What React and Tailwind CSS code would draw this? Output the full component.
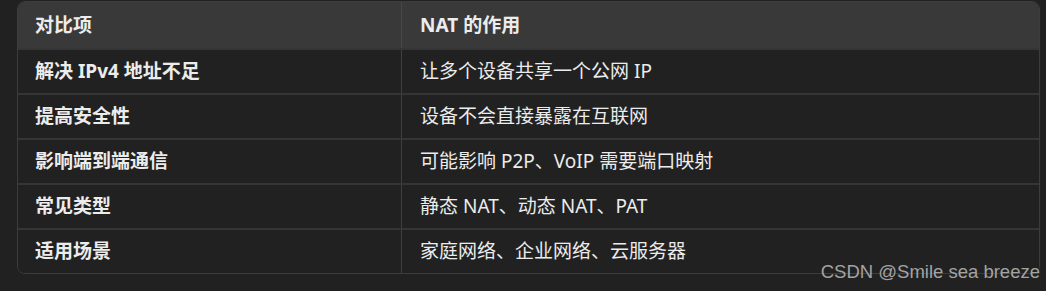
import React from 'react';

const rows = [
    ['解决 IPv4 地址不足', '让多个设备共享一个公网 IP'],
    ['提高安全性', '设备不会直接暴露在互联网'],
    ['影响端到端通信', '可能影响 P2P、VoIP 需要端口映射'],
    ['常见类型', '静态 NAT、动态 NAT、PAT'],
    ['适用场景', '家庭网络、企业网络、云服务器'],
];

const font = { fontFamily: '"Noto Sans", "Noto Sans CJK SC", sans-serif' };

export default function App() {
    return (
        <div className="relative w-[1046px] h-[291px] bg-[#212121] pl-[17px] pt-px overflow-hidden" style={font}>
            <div className="w-[1023px] rounded-lg border border-[#3c3c3c] overflow-hidden text-[19px] text-[#ececec]">
                {/* header */}
                <div className="grid grid-cols-[384px_1fr] h-[46px] bg-[#393939]">
                    <div className="flex items-center pl-[17px] border-r border-[#474747] font-bold">对比项</div>
                    <div className="flex items-center pl-[18px] font-bold">NAT 的作用</div>
                </div>
                {rows.map(([a, b], i) => (
                    <div key={i} className="grid grid-cols-[384px_1fr] h-[45px] border-t-2 border-[#353535] bg-[#212121]">
                        <div className="flex items-center pl-[17px] border-r border-[#3f3f3f] font-bold">{a}</div>
                        <div className="flex items-center pl-[18px]">{b}</div>
                    </div>
                ))}
            </div>

            {/* watermark */}
            <div
                className="absolute right-[6px] bottom-[10px] text-[18.5px] text-[#a3a3a3] leading-none"
                style={{ fontFamily: '"Liberation Sans", Arial, sans-serif' }}
            >
                CSDN @Smile sea breeze
            </div>
        </div>
    );
}
